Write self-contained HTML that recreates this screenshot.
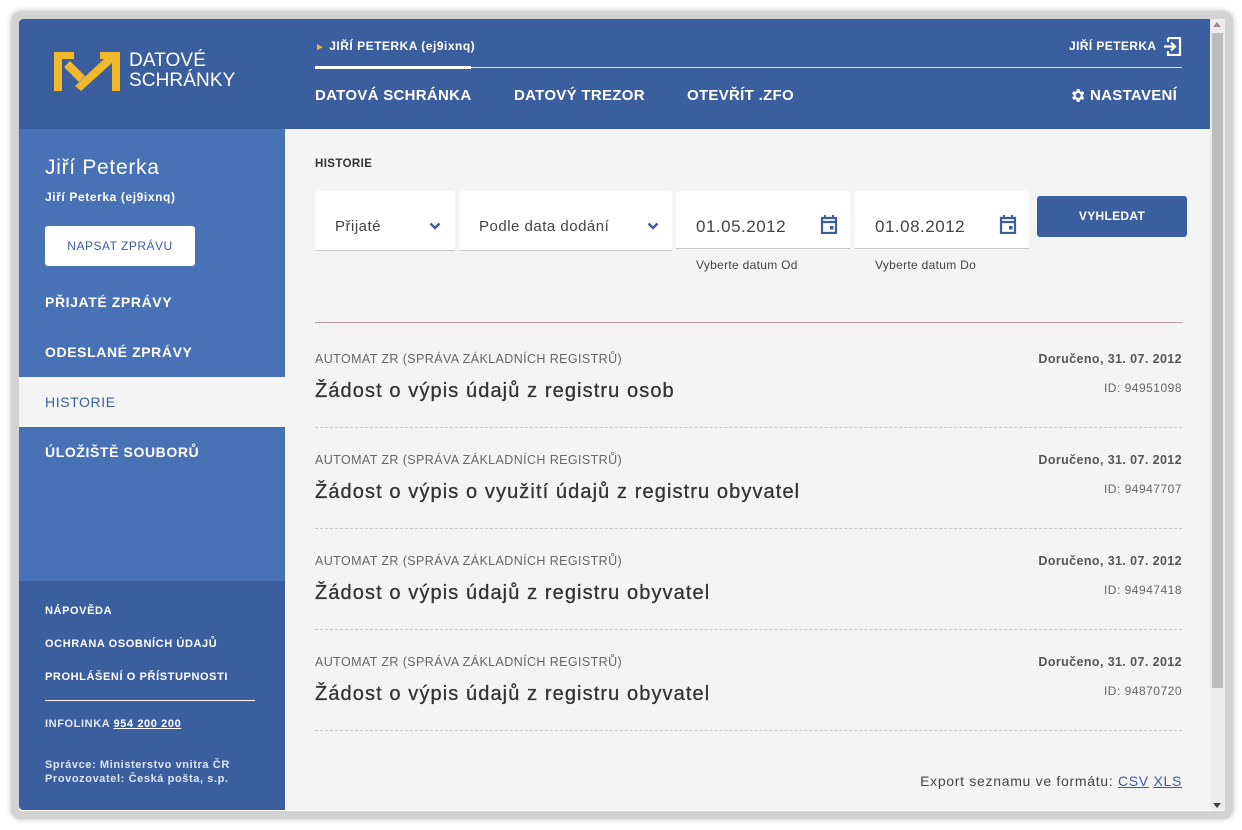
<!DOCTYPE html>
<html><head><meta charset="utf-8"><style>
*{box-sizing:border-box;margin:0;padding:0}
body{width:1242px;height:830px;background:#fff;font-family:"Liberation Sans",sans-serif;position:relative;overflow:hidden}
.frame{position:absolute;left:11px;top:11px;width:1222px;height:808px;border:8px solid #d2d2d2;border-radius:10px;box-shadow:0 0 6px #bbb}
.win{position:absolute;left:19px;top:19px;width:1206px;height:791px;background:#f4f4f4;overflow:hidden;border-radius:4px 0 0 4px}
.hdr{position:absolute;left:0;top:0;width:1191px;height:110px;background:#3a5e9e;color:#fff}
.abs{position:absolute}
.side{position:absolute;left:0;top:110px;width:266px;height:452px;background:#4872b5;color:#fff}
.side2{position:absolute;left:0;top:562px;width:266px;height:229px;background:#3a5e9e;color:#fff}
.b{font-weight:bold}
.scroll{position:absolute;left:1191px;top:0;width:15px;height:791px;background:#ececec}
.thumb{position:absolute;left:1193px;top:14px;width:11px;height:655px;background:#bdbdbd}
.field{position:absolute;background:#fff;border-bottom:1px solid #c8c8c8;height:60px;top:172px;border-radius:3px 3px 0 0;font-size:15px;color:#444;letter-spacing:.5px}
.item{position:absolute;left:296px;width:867px;height:101px;border-bottom:1px dashed #c8c8c8}
.item .s{position:absolute;left:0;top:25px;font-size:12.5px;color:#666;letter-spacing:.4px}
.item .t{position:absolute;left:0;top:53px;font-size:20px;color:#333;letter-spacing:1.1px;-webkit-text-stroke:.3px #333}
.item .d{position:absolute;right:0;top:25px;font-size:12.5px;color:#555;font-weight:bold;letter-spacing:.4px}
.item .i{position:absolute;right:0;top:54px;font-size:12px;color:#666;letter-spacing:.5px}
.nav{position:absolute;top:68px;font-size:15px;font-weight:bold;letter-spacing:.3px}
.sl{position:absolute;left:26px;font-size:14px;font-weight:bold;letter-spacing:.6px}
.fl{position:absolute;left:26px;font-size:11px;font-weight:bold;letter-spacing:.6px}
</style></head><body>
<div class="frame"></div>
<div class="win">
<div class="hdr">
 <svg class="abs" style="left:35px;top:33px" width="66" height="39" viewBox="0 0 66 39"><path d="M0 0H20V7H8V39H0Z M16 9L31 24L25 30L10 15Z M46 0H66V39H58V11L27 39L21 34L50 7H46Z" fill="#f0b82a"/></svg>
 <div class="abs" style="left:110px;top:32px;font-size:19px;line-height:20px;letter-spacing:.1px">DATOVÉ<br>SCHRÁNKY</div>
 <div class="abs b" style="left:296px;top:20px;font-size:12px;letter-spacing:.5px"><span style="color:#f0b82a;font-size:10px">►</span> JIŘÍ PETERKA (ej9ixnq)</div>
 <div class="abs" style="left:296px;top:48px;width:867px;height:1px;background:#dfe6f2"></div>
 <div class="abs" style="left:296px;top:47px;width:156px;height:3px;background:#fff"></div>
 <div class="nav" style="left:296px">DATOVÁ SCHRÁNKA</div>
 <div class="nav" style="left:495px">DATOVÝ TREZOR</div>
 <div class="nav" style="left:668px">OTEVŘÍT .ZFO</div>
 <div class="abs b" style="left:1050px;top:20px;font-size:12px;letter-spacing:.4px">JIŘÍ PETERKA</div>
 <svg class="abs" style="left:1143px;top:18px" width="20" height="19" viewBox="0 0 20 19"><path d="M6 1H18V18H6V14 M6 5V1 M2 9.5H13 M9 5.5L13 9.5L9 13.5" stroke="#fff" stroke-width="2.2" fill="none"/></svg>
 <svg class="abs" style="left:1050px;top:68px" width="17" height="17" viewBox="0 0 24 24"><path fill="#fff" d="M19.4 13a7.5 7.5 0 0 0 0-2l2.1-1.6-2-3.5-2.5 1a7 7 0 0 0-1.7-1L15 3h-4l-.4 2.9a7 7 0 0 0-1.7 1l-2.5-1-2 3.5L6.6 11a7.5 7.5 0 0 0 0 2l-2.2 1.6 2 3.5 2.5-1a7 7 0 0 0 1.7 1L11 21h4l.4-2.9a7 7 0 0 0 1.7-1l2.5 1 2-3.5zM13 15.5a3.5 3.5 0 1 1 0-7 3.5 3.5 0 0 1 0 7z"/></svg>
 <div class="nav" style="left:1071px">NASTAVENÍ</div>
</div>
<div class="side">
 <div class="abs" style="left:26px;top:27px;font-size:21px;letter-spacing:.7px">Jiří Peterka</div>
 <div class="abs b" style="left:26px;top:61px;font-size:12px;letter-spacing:.6px">Jiří Peterka (ej9ixnq)</div>
 <div class="abs" style="left:26px;top:97px;width:150px;height:40px;background:#fff;border-radius:3px;color:#3a5e9e;font-size:12px;text-align:center;line-height:40px;letter-spacing:.5px">NAPSAT ZPRÁVU</div>
 <div class="sl" style="top:165px">PŘIJATÉ ZPRÁVY</div>
 <div class="sl" style="top:215px">ODESLANÉ ZPRÁVY</div>
 <div class="abs" style="left:0;top:248px;width:266px;height:50px;background:#f4f4f4"></div>
 <div class="sl" style="top:265px;color:#3a5e9e;font-weight:normal">HISTORIE</div>
 <div class="sl" style="top:315px">ÚLOŽIŠTĚ SOUBORŮ</div>
</div>
<div class="side2">
 <div class="fl" style="top:24px">NÁPOVĚDA</div>
 <div class="fl" style="top:57px">OCHRANA OSOBNÍCH ÚDAJŮ</div>
 <div class="fl" style="top:90px">PROHLÁŠENÍ O PŘÍSTUPNOSTI</div>
 <div class="abs" style="left:26px;top:119px;width:210px;height:1px;background:#fff"></div>
 <div class="fl" style="top:137px;color:#e0e8f4">INFOLINKA <span style="text-decoration:underline;color:#fff">954 200 200</span></div>
 <div class="fl" style="top:177px;line-height:14px;color:#dde5f2">Správce: Ministerstvo vnitra ČR<br>Provozovatel: Česká pošta, s.p.</div>
</div>
<div class="abs b" style="left:296px;top:139px;font-size:11.5px;color:#333;letter-spacing:.4px">HISTORIE</div>
<div class="field" style="left:296px;width:140px"><span class="abs" style="left:20px;top:27px">Přijaté</span><svg class="abs" style="left:114px;top:31px" width="12" height="8" viewBox="0 0 12 8"><path d="M1.5 1.5L6 6L10.5 1.5" stroke="#3a5e9e" stroke-width="2.4" fill="none"/></svg></div>
<div class="field" style="left:440px;width:213px"><span class="abs" style="left:20px;top:27px">Podle data dodání</span><svg class="abs" style="left:188px;top:31px" width="12" height="8" viewBox="0 0 12 8"><path d="M1.5 1.5L6 6L10.5 1.5" stroke="#3a5e9e" stroke-width="2.4" fill="none"/></svg></div>
<div class="field" style="left:657px;width:174px;height:58px"><span class="abs" style="left:20px;top:26px;font-size:17px">01.05.2012</span><svg class="abs" style="left:144px;top:24px" width="18" height="19" viewBox="0 0 18 19"><path d="M2 3H16V18H2Z M2 7H16" stroke="#3a5e9e" stroke-width="2.2" fill="none"/><path d="M5 0V4M13 0V4" stroke="#3a5e9e" stroke-width="2"/><rect x="10" y="11" width="3.5" height="3.5" fill="#3a5e9e"/></svg></div>
<div class="abs" style="left:677px;top:239px;font-size:12px;color:#444;letter-spacing:.3px">Vyberte datum Od</div>
<div class="field" style="left:836px;width:174px;height:58px"><span class="abs" style="left:20px;top:26px;font-size:17px">01.08.2012</span><svg class="abs" style="left:144px;top:24px" width="18" height="19" viewBox="0 0 18 19"><path d="M2 3H16V18H2Z M2 7H16" stroke="#3a5e9e" stroke-width="2.2" fill="none"/><path d="M5 0V4M13 0V4" stroke="#3a5e9e" stroke-width="2"/><rect x="10" y="11" width="3.5" height="3.5" fill="#3a5e9e"/></svg></div>
<div class="abs" style="left:856px;top:239px;font-size:12px;color:#444;letter-spacing:.3px">Vyberte datum Do</div>
<div class="abs b" style="left:1018px;top:177px;width:150px;height:41px;background:#3a5e9e;border-radius:3px;color:#fff;font-size:12px;text-align:center;line-height:41px;letter-spacing:.3px">VYHLEDAT</div>
<div class="abs" style="left:296px;top:303px;width:867px;height:1px;background:#b89aa2"></div>
<div class="item" style="top:308px"><div class="s">AUTOMAT ZR (SPRÁVA ZÁKLADNÍCH REGISTRŮ)</div><div class="t">Žádost o výpis údajů z registru osob</div><div class="d">Doručeno, 31. 07. 2012</div><div class="i">ID: 94951098</div></div>
<div class="item" style="top:409px"><div class="s">AUTOMAT ZR (SPRÁVA ZÁKLADNÍCH REGISTRŮ)</div><div class="t">Žádost o výpis o využití údajů z registru obyvatel</div><div class="d">Doručeno, 31. 07. 2012</div><div class="i">ID: 94947707</div></div>
<div class="item" style="top:510px"><div class="s">AUTOMAT ZR (SPRÁVA ZÁKLADNÍCH REGISTRŮ)</div><div class="t">Žádost o výpis údajů z registru obyvatel</div><div class="d">Doručeno, 31. 07. 2012</div><div class="i">ID: 94947418</div></div>
<div class="item" style="top:611px"><div class="s">AUTOMAT ZR (SPRÁVA ZÁKLADNÍCH REGISTRŮ)</div><div class="t">Žádost o výpis údajů z registru obyvatel</div><div class="d">Doručeno, 31. 07. 2012</div><div class="i">ID: 94870720</div></div>
<div class="abs" style="right:43px;top:754px;font-size:14px;color:#444;letter-spacing:.7px">Export seznamu ve formátu: <span style="color:#3a5e9e;text-decoration:underline">CSV</span> <span style="color:#3a5e9e;text-decoration:underline">XLS</span></div>
<div class="scroll"></div><div class="thumb"></div>
<div class="abs" style="left:1194px;top:3px;width:0;height:0;border:4px solid transparent;border-bottom:5px solid #a08890;border-top:0"></div>
<div class="abs" style="left:1194px;top:784px;width:0;height:0;border:4px solid transparent;border-top:5px solid #444;border-bottom:0"></div>
</div>
</body></html>
